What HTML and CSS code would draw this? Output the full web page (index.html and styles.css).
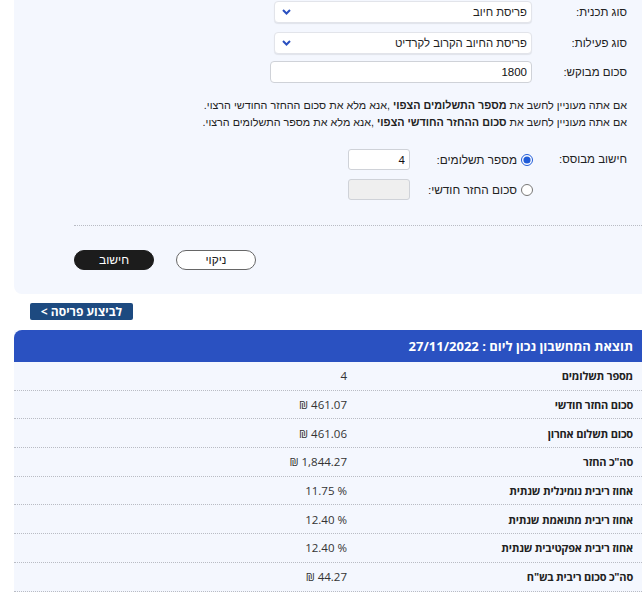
FILE: index.html
```html
<!DOCTYPE html>
<html lang="he" dir="rtl">
<head>
  <meta charset="UTF-8">
  <meta name="viewport" content="width=device-width, initial-scale=1.0">
  <link rel="stylesheet" href="styles.css">
  <title>מחשבון פריסה</title>
</head>
<body>

  <div class="page">
    <div class="calc">
      <div class="form-row row-1">
        <label class="form-label">סוג תכנית:</label>
        <div class="select-box">
          <select class="select">
            <option>פריסת חיוב</option>
          </select>
          <svg class="chevron" width="9" height="6" viewBox="0 0 9 6"><path d="M1 1l3.5 3.5L8 1" fill="none" stroke="#2a50c0" stroke-width="2"/></svg>
        </div>
      </div>
      <div class="form-row row-2">
        <label class="form-label">סוג פעילות:</label>
        <div class="select-box">
          <select class="select">
            <option>פריסת החיוב הקרוב לקרדיט</option>
          </select>
          <svg class="chevron" width="9" height="6" viewBox="0 0 9 6"><path d="M1 1l3.5 3.5L8 1" fill="none" stroke="#2a50c0" stroke-width="2"/></svg>
        </div>
      </div>
      <div class="form-row">
        <label class="form-label">סכום מבוקש:</label>
        <input class="amount" type="text" value="1800">
      </div>

      <div class="hint">
        <p>אם אתה מעוניין לחשב את <b>מספר התשלומים הצפוי</b> ,אנא מלא את סכום ההחזר החודשי הרצוי.</p>
        <p>אם אתה מעוניין לחשב את <b>סכום ההחזר החודשי הצפוי</b> ,אנא מלא את מספר התשלומים הרצוי.</p>
      </div>

      <div class="based">
        <div class="form-label based-label">חישוב מבוסס:</div>
        <div class="options">
          <div class="option">
            <label class="option-label"><input type="radio" name="by" checked> מספר תשלומים:</label>
            <input class="small-input" type="text" value="4">
          </div>
          <div class="option">
            <label class="option-label"><input type="radio" name="by"> סכום החזר חודשי:</label>
            <input class="small-input" type="text" disabled>
          </div>
        </div>
      </div>

      <div class="separator"></div>

      <div class="buttons">
        <button class="btn btn-clear">ניקוי</button>
        <button class="btn btn-calc">חישוב</button>
      </div>
    </div>

    <div class="action">
      <button class="btn-go">לביצוע פריסה &gt;</button>
    </div>

    <div class="results">
      <div class="results-head">תוצאת המחשבון נכון ליום : 27/11/2022</div>
      <div class="result-row"><span class="r-label">מספר תשלומים</span><span class="r-value">4</span></div>
      <div class="result-row"><span class="r-label">סכום החזר חודשי</span><span class="r-value"><span class="ltr">₪ 461.07</span></span></div>
      <div class="result-row"><span class="r-label">סכום תשלום אחרון</span><span class="r-value"><span class="ltr">₪ 461.06</span></span></div>
      <div class="result-row"><span class="r-label">סה"כ החזר</span><span class="r-value"><span class="ltr">₪ 1,844.27</span></span></div>
      <div class="result-row"><span class="r-label">אחוז ריבית נומינלית שנתית</span><span class="r-value"><span class="ltr">11.75 %</span></span></div>
      <div class="result-row"><span class="r-label">אחוז ריבית מתואמת שנתית</span><span class="r-value"><span class="ltr">12.40 %</span></span></div>
      <div class="result-row"><span class="r-label">אחוז ריבית אפקטיבית שנתית</span><span class="r-value"><span class="ltr">12.40 %</span></span></div>
      <div class="result-row"><span class="r-label">סה"כ סכום ריבית בש"ח</span><span class="r-value"><span class="ltr">₪ 44.27</span></span></div>
    </div>
  </div>

</body>
</html>
```

FILE: styles.css
```css
*{
  margin: 0;
  padding: 0;
  box-sizing: border-box;
}
body{
  background: #fff;
  font-family: "Liberation Sans", Arial, sans-serif;
  color: #222;
  overflow-x: hidden;
}
.page{
  margin-left: 14px;
}
.calc{
  background: #f4f7fe;
  border-bottom-left-radius: 8px;
  padding: 1px 15px 24px 60px;
}
.form-row{
  display: flex;
  align-items: center;
  height: 22px;
}
.row-1{
  margin-bottom: 9px;
}
.row-2{
  margin-bottom: 7px;
}
.form-label{
  width: 95px;
  font-size: 11.5px;
  color: #222;
  white-space: nowrap;
}
.select-box{
  position: relative;
  width: 258px;
  height: 22px;
}
.select{
  appearance: none;
  width: 100%;
  height: 100%;
  background: #fff;
  border: 1px solid #e2e4ea;
  border-radius: 4px;
  box-shadow: 0 1px 1px rgba(0,0,0,0.08);
  font-family: "Liberation Sans", Arial, sans-serif;
  font-size: 11.3px;
  color: #222;
  padding: 0 4px 0 20px;
}
.chevron{
  position: absolute;
  left: 8px;
  top: 8px;
}
.amount{
  width: 262px;
  height: 22px;
  border: 1px solid #cfd2d8;
  border-radius: 4px;
  background: #fff;
  font-family: "Liberation Sans", Arial, sans-serif;
  font-size: 11.5px;
  color: #111;
  padding: 0 4px;
  text-align: right;
}
.hint{
  margin-top: 14px;
  font-size: 10.8px;
  line-height: 17px;
  color: #222;
  white-space: nowrap;
}
.based{
  display: flex;
  margin-top: 18px;
}
.based-label{
  padding-top: 4px;
}
.options{
  display: flex;
  flex-direction: column;
  gap: 9px;
}
.option{
  display: flex;
  align-items: center;
  gap: 13px;
}
.option-label{
  width: 110px;
  display: flex;
  align-items: center;
  gap: 4px;
  font-size: 11.8px;
  white-space: nowrap;
  margin-right: -1px;
}
.option-label input{
  width: 12px;
  height: 12px;
  margin: 0;
  accent-color: #1f5bd8;
}
.small-input{
  width: 62px;
  height: 21px;
  border: 1px solid #cfd2d8;
  border-radius: 3px;
  background: #fff;
  font-family: "Liberation Sans", Arial, sans-serif;
  font-size: 11.5px;
  color: #111;
  padding: 0 4px;
}
.small-input:disabled{
  background: #efefef;
}
.separator{
  margin-top: 25px;
  margin-right: -15px;
  border-top: 1px dotted #b9bcc4;
}
.buttons{
  display: flex;
  justify-content: flex-end;
  gap: 22px;
  margin-top: 24px;
}
.btn{
  width: 80px;
  height: 20px;
  border-radius: 10px;
  font-family: "Liberation Sans", Arial, sans-serif;
  font-size: 12px;
  cursor: pointer;
}
.btn-clear{
  background: #fff;
  border: 1px solid #666;
  color: #222;
}
.btn-calc{
  background: #1c1c1c;
  border: 1px solid #1c1c1c;
  color: #fff;
}
.action{
  display: flex;
  justify-content: flex-end;
  padding: 9px 0 0 16px;
}
.btn-go{
  width: 103px;
  height: 17px;
  background: #1d4a80;
  border: none;
  border-radius: 2px;
  color: #fff;
  font-family: "Open Sans", "Liberation Sans", Arial, sans-serif;
  font-weight: bold;
  font-size: 12px;
}
.results{
  margin-top: 10px;
  background: #f4f7fe;
  font-family: "Open Sans", "Liberation Sans", Arial, sans-serif;
}
.results-head{
  height: 32px;
  background: #2a51c1;
  border-top-left-radius: 8px;
  color: #fff;
  font-weight: bold;
  font-size: 13px;
  display: flex;
  align-items: center;
  padding-right: 9px;
}
.result-row{
  display: flex;
  align-items: center;
  height: 28.7px;
  padding-right: 9px;
  border-bottom: 1px dotted #b9bcc4;
  font-size: 11.5px;
}
.r-label{
  width: 286px;
  font-size: 11px;
  font-weight: bold;
  letter-spacing: -0.2px;
  color: #222;
}
.r-value{
  color: #333;
}
.ltr{
  direction: ltr;
  unicode-bidi: isolate;
}
```
